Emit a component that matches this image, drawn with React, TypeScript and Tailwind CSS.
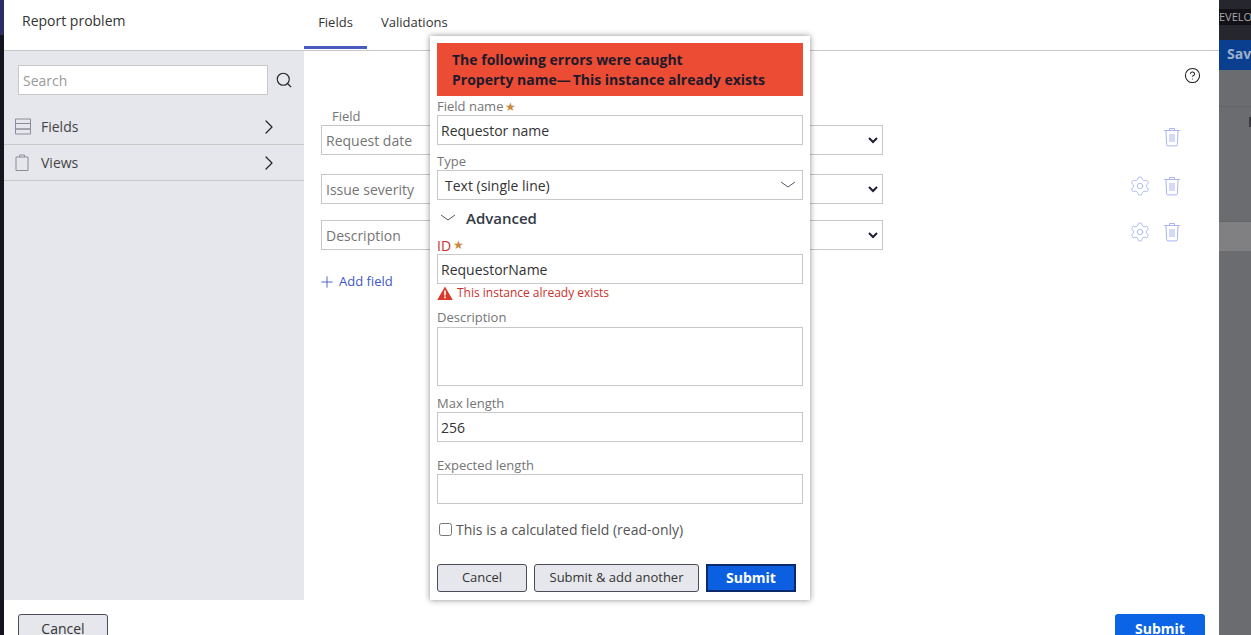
import React from 'react';
import { ChevronRight, CircleHelp, Plus, Search, Settings } from 'lucide-react';

const font = { fontFamily: '"Open Sans", sans-serif' };

const TrashIcon: React.FC = () => (
  <svg width="18" height="20" viewBox="0 0 18 20" fill="none" stroke="#aab5f0" strokeWidth="1">
    <path d="M1 3.5h16M6.5 3.5V1.5h5v2M3 3.5l.6 14a1.5 1.5 0 0 0 1.5 1.4h7.8a1.5 1.5 0 0 0 1.5-1.4l.6-14" />
    <path d="M7 7v8M9 7v8M11 7v8" />
  </svg>
);

const FieldsIcon: React.FC = () => (
  <svg width="18" height="17" viewBox="0 0 18 17" fill="none" stroke="#8a8c98" strokeWidth="1">
    <path d="M1.5 1h15v4.5h-15zM1.5 5.5h15v5.5h-15zM1.5 11h15v5h-15z" />
  </svg>
);

const ClipboardIcon: React.FC = () => (
  <svg className="ml-[1px]" width="14" height="17" viewBox="0 0 14 17" fill="none" stroke="#8a8c98" strokeWidth="1">
    <path d="M1 3h12v13.5H1zM4.5 3V1h5v2" />
  </svg>
);

const SmallChevron: React.FC<{ className?: string }> = ({ className }) => (
  <svg className={className} width="16" height="8" viewBox="0 0 16 8" fill="none" stroke="#555764" strokeWidth="1">
    <path d="M1 1l7 5 7-5" />
  </svg>
);

const SelectArrow: React.FC = () => (
  <svg width="10" height="7" viewBox="0 0 10 7" fill="none" stroke="#1d1f30" strokeWidth="2">
    <path d="M1 1l4 4 4-4" />
  </svg>
);

const WarningIcon: React.FC = () => (
  <svg width="16" height="14" viewBox="0 0 16 14">
    <path d="M8 0.5L15.8 14H0.2z" fill="#d93a2b" />
    <path d="M7.2 4.5h1.6v5H7.2zM7.2 10.5h1.6v1.7H7.2z" fill="#fff" />
  </svg>
);

const Star: React.FC = () => <span className="ml-[2px] text-[12px] text-[#c9883c]">★</span>;

const inputClass =
  'block w-full h-[30px] border border-[#c8c8c8] bg-white px-[3px] text-[14px] text-[#333] outline-none';

const Label: React.FC<{ text: string; required?: boolean; className?: string; error?: boolean }> = ({
  text,
  required,
  className,
  error,
}) => (
  <div className={`flex items-center h-[18px] text-[13px] ${error ? 'text-[#c9302c]' : 'text-[#757575]'} ${className ?? ''}`}>
    {text}
    {required && <Star />}
  </div>
);

const FieldRow: React.FC<{ name: string; gear?: boolean; className?: string }> = ({ name, gear, className }) => (
  <div className={`flex items-center ${className ?? ''}`}>
    <div className="flex w-[562px] gap-5 shrink-0">
      <input readOnly value={name} className={`${inputClass} !w-[280px] !px-[4px] text-[#757575]`} />
      <div className="flex flex-1 h-[30px] items-center justify-end border border-[#c8c8c8] pr-[4px]">
        <SelectArrow />
      </div>
    </div>
    <div className="ml-[246px] flex w-[52px] items-center justify-end gap-[12px] pb-[6px]">
      {gear && <Settings size={22} strokeWidth={0.9} className="text-[#a3afee]" />}
      <TrashIcon />
    </div>
  </div>
);

const SideItem: React.FC<{ icon: React.ReactNode; label: string }> = ({ icon, label }) => (
  <div className="flex h-[36px] items-center border-b border-[#c8c8c8] pl-[10px] text-[14px] text-[#444]">
    <div className="flex w-[27px] justify-start">{icon}</div>
    <span>{label}</span>
    <ChevronRight size={24} strokeWidth={1.2} className="ml-auto mr-[23px] text-[#222]" />
  </div>
);

const Button: React.FC<{ className: string; children: React.ReactNode }> = ({ className, children }) => (
  <button className={`h-[28px] shrink-0 ${className}`}>{children}</button>
);

const secondaryBtn = 'rounded-[3px] border border-[#4a4c5a] bg-[#e6e7ec] text-[#333]';

const Modal: React.FC = () => (
  <div className="absolute left-[430px] top-[36px] h-[564px] w-[380px] bg-white px-[7px] pt-[7px] shadow-[0_0_6px_rgba(0,0,0,0.45)]">
    <div className="h-[53px] bg-[#ec4c34] pl-[15px] pt-[7px] text-[14px] font-bold leading-[20px] text-[#1d1a2b]">
      <div>The following errors were caught</div>
      <div>
        Property name—<span className="ml-[2px]">This instance already exists</span>
      </div>
    </div>

    <Label text="Field name" required className="h-[19px] pt-[2px]" />
    <input readOnly value="Requestor name" className={inputClass} />

    <Label text="Type" className="mt-[7px] pt-[2px]" />
    <div className="flex h-[30px] items-center justify-between border border-[#c8c8c8] pl-[7px] pr-[6px] text-[14px] text-[#333]">
      Text (single line)
      <SmallChevron />
    </div>

    <div className="mt-[3px] flex h-[30px] items-center pl-[3px] text-[15px] font-semibold text-[#333a45]">
      <SmallChevron />
      <span className="ml-[10px]">Advanced</span>
    </div>

    <Label text="ID" required error className="mt-[3px] text-[14px]" />
    <input readOnly value="RequestorName" className={inputClass} />
    <div className="flex h-[18px] items-center gap-[4px] text-[12px] text-[#c9302c]">
      <WarningIcon />
      This instance already exists
    </div>

    <Label text="Description" className="mt-[6px] h-[19px]" />
    <div className="h-[59px] border border-[#c8c8c8]" />

    <Label text="Max length" className="mt-[8px] pt-[2px]" />
    <input readOnly value="256" className={inputClass} />

    <Label text="Expected length" className="mt-[14px] pt-[2px]" />
    <div className="h-[30px] border border-[#c8c8c8]" />

    <label className="mt-[15px] flex h-[20px] items-center gap-[4px] pl-[2px] text-[14px] text-[#555]">
      <input type="checkbox" className="m-0 h-[13px] w-[13px]" />
      This is a calculated field (read-only)
    </label>

    <div className="mt-[25px] flex gap-[7px]">
      <Button className={`w-[90px] text-[13px] ${secondaryBtn}`}>Cancel</Button>
      <Button className={`w-[165px] text-[13px] ${secondaryBtn}`}>Submit &amp; add another</Button>
      <Button className="w-[90px] border-2 border-[#0a2a6b] bg-[#0b5fe0] pb-[2px] text-[14px] font-bold text-white">Submit</Button>
    </div>
  </div>
);

export default function App() {
  return (
    <div className="relative flex h-[635px] w-[1251px] overflow-hidden" style={font}>
      {/* Backdrop, left edge */}
      <div className="flex w-[4px] shrink-0 flex-col bg-[#14141f]">
        <div className="h-[35px] bg-[#2b2d63]" />
      </div>

      {/* Dialog */}
      <div className="flex w-[1215px] shrink-0 flex-col bg-white">
        <div className="flex h-[51px] shrink-0 border-b border-[#c8c8c8]">
          <div className="w-[300px] pl-[18px] pt-[10px] text-[14px] text-[#333]">Report problem</div>
          <div className="flex text-[13px] text-[#333]">
            <div className="flex h-[49px] w-[63px] justify-center border-b-[3px] border-[#4a5bc0] pt-[13px]">Fields</div>
            <div className="ml-[14px] pt-[13px]">Validations</div>
          </div>
        </div>

        <div className="flex h-[549px] shrink-0">
          <div className="w-[300px] shrink-0 bg-[#e6e7ec]">
            <div className="flex items-center pl-[14px] pt-[14px]">
              <input
                readOnly
                placeholder="Search"
                className="h-[30px] w-[250px] border border-[#c8c8c8] bg-white px-[4px] text-[14px] outline-none placeholder:text-[#999]"
              />
              <Search size={18} strokeWidth={1.5} className="ml-[7px] text-[#222]" />
            </div>
            <div className="mt-[14px]">
              <SideItem icon={<FieldsIcon />} label="Fields" />
              <SideItem icon={<ClipboardIcon />} label="Views" />
            </div>
          </div>

          <div className="flex-1 pl-[17px] pt-[16px]">
            <div className="flex justify-end pr-[18px]">
              <CircleHelp size={17} strokeWidth={1.5} className="text-[#222]" />
            </div>
            <div className="mt-[23px] h-[18px] pl-[11px] text-[13px] text-[#757575]">Field</div>
            <FieldRow name="Request date" />
            <FieldRow name="Issue severity" gear className="mt-[19px]" />
            <FieldRow name="Description" gear className="mt-[16px]" />
            <div className="mt-[22px] -ml-[3px] flex items-center gap-[3px] text-[13px] text-[#3f56c8]">
              <Plus size={18} strokeWidth={1.2} />
              Add field
            </div>
          </div>
        </div>

        <div className="flex flex-1 items-start justify-between overflow-hidden pl-[14px] pr-[14px] pt-[14px]">
          <Button className={`w-[90px] text-[14px] ${secondaryBtn}`}>Cancel</Button>
          <Button className="w-[90px] rounded-[3px] bg-[#0b63e5] text-[14px] font-bold text-white">Submit</Button>
        </div>
      </div>

      {/* Backdrop, right edge */}
      <div className="flex flex-1 flex-col bg-[#6b6c70]">
        <div className="h-[9px] bg-[#26262e]" />
        <div className="h-[16px] overflow-hidden whitespace-nowrap bg-[#111116] text-[11px] leading-[16px] text-[#a9a9b0]">EVELOP</div>
        <div className="h-[15px] bg-[#26262e]" />
        <div className="h-[30px] overflow-hidden whitespace-nowrap bg-[#0a3f8f] pl-[8px] text-[14px] font-bold leading-[28px] text-[#9fb0c9]">Save</div>
        <div className="h-[37px] border-b border-[#636468]" />
        <div className="flex h-[36px] items-start pl-[30px] pt-[10px]">
          <div className="h-[10px] w-[2px] bg-[#3a3a40]" />
        </div>
        <div className="h-[79px] border-b border-[#636468]" />
        <div className="h-[29px] bg-[#808082]" />
      </div>

      <Modal />
    </div>
  );
}
